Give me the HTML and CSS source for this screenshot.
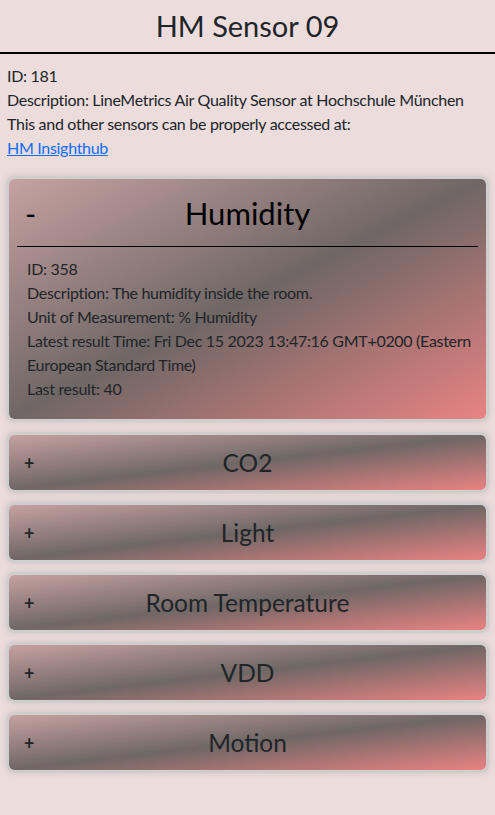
FILE: index.html
```html
<!DOCTYPE html>
<html lang="de">
<head>
<meta charset="utf-8">
<title>HM Sensor 09</title>
<link rel="stylesheet" href="styles.css">
</head>
<body>
<header class="top">
  <h1 class="title">HM Sensor 09</h1>
</header>
<section class="info">
  <p>ID: 181</p>
  <p>Description: LineMetrics Air Quality Sensor at Hochschule München</p>
  <p>This and other sensors can be properly accessed at:</p>
  <p><a href="#">HM Insighthub</a></p>
</section>
<main class="list">
  <div class="card open">
    <div class="card-inner">
      <div class="card-head big">
        <span class="toggle minus">-</span>
        <h2 class="card-title">Humidity</h2>
      </div>
      <div class="card-body">
        <p>ID: 358</p>
        <p>Description: The humidity inside the room.</p>
        <p>Unit of Measurement: % Humidity</p>
        <p>Latest result Time: Fri Dec 15 2023 13:47:16 GMT+0200 (Eastern European Standard Time)</p>
        <p>Last result: 40</p>
      </div>
    </div>
  </div>
  <div class="card"><div class="card-inner"><div class="card-head"><span class="toggle">+</span><h2 class="card-title">CO2</h2></div></div></div>
  <div class="card"><div class="card-inner"><div class="card-head"><span class="toggle">+</span><h2 class="card-title">Light</h2></div></div></div>
  <div class="card"><div class="card-inner"><div class="card-head"><span class="toggle">+</span><h2 class="card-title">Room Temperature</h2></div></div></div>
  <div class="card"><div class="card-inner"><div class="card-head"><span class="toggle">+</span><h2 class="card-title">VDD</h2></div></div></div>
  <div class="card"><div class="card-inner"><div class="card-head"><span class="toggle">+</span><h2 class="card-title">Motion</h2></div></div></div>
</main>
</body>
</html>
```
FILE: styles.css
```css
* { box-sizing: border-box; }
html, body { margin: 0; padding: 0; }
body {
  background: #ecdcdc;
  color: #212529;
  font-family: "Lato", "Open Sans", sans-serif;
  font-size: 16px;
  line-height: 24px;
}
p { margin: 0; letter-spacing: -0.3px; }
.top {
  border-bottom: 2px solid #000;
  height: 54px;
  display: flex;
  align-items: center;
  justify-content: center;
}
.title {
  margin: 0;
  font-size: 29px;
  font-weight: 400;
  line-height: 36px;
}
.info { padding: 10px 7px 0; }
.info a { color: #0d6efd; text-decoration: underline; }
.list {
  padding: 16px 6px 20px;
  display: flex;
  flex-direction: column;
  gap: 9px;
}
.card {
  border: 3px solid #d0cdcd;
  border-radius: 8px;
  box-shadow: 0 0 6px rgba(190, 180, 180, 0.6);
  overflow: hidden;
}
.card.open { margin-bottom: 1px; }
.card-inner {
  background: linear-gradient(to bottom right, #c6a1a1 0%, #6f6765 50%, #e98383 100%);
  border-radius: 5px;
}
.card-head {
  position: relative;
  height: 55px;
  display: flex;
  align-items: center;
  justify-content: center;
}
.card-head.big {
  height: 68px;
  margin: 0 8px;
  border-bottom: 1px solid #000;
}
.toggle {
  position: absolute;
  left: 15px;
  font-size: 18px;
  font-weight: 700;
}
.big .toggle { left: 8px; font-size: 30px; font-weight: 400; color: #000; }
.card-title {
  margin: 0;
  font-size: 24.5px;
  font-weight: 400;
  line-height: 30px;
}
.big .card-title { font-size: 31px; color: #000; line-height: 36px; }
.card-body { padding: 10px 6px 18px 18px; }
```
